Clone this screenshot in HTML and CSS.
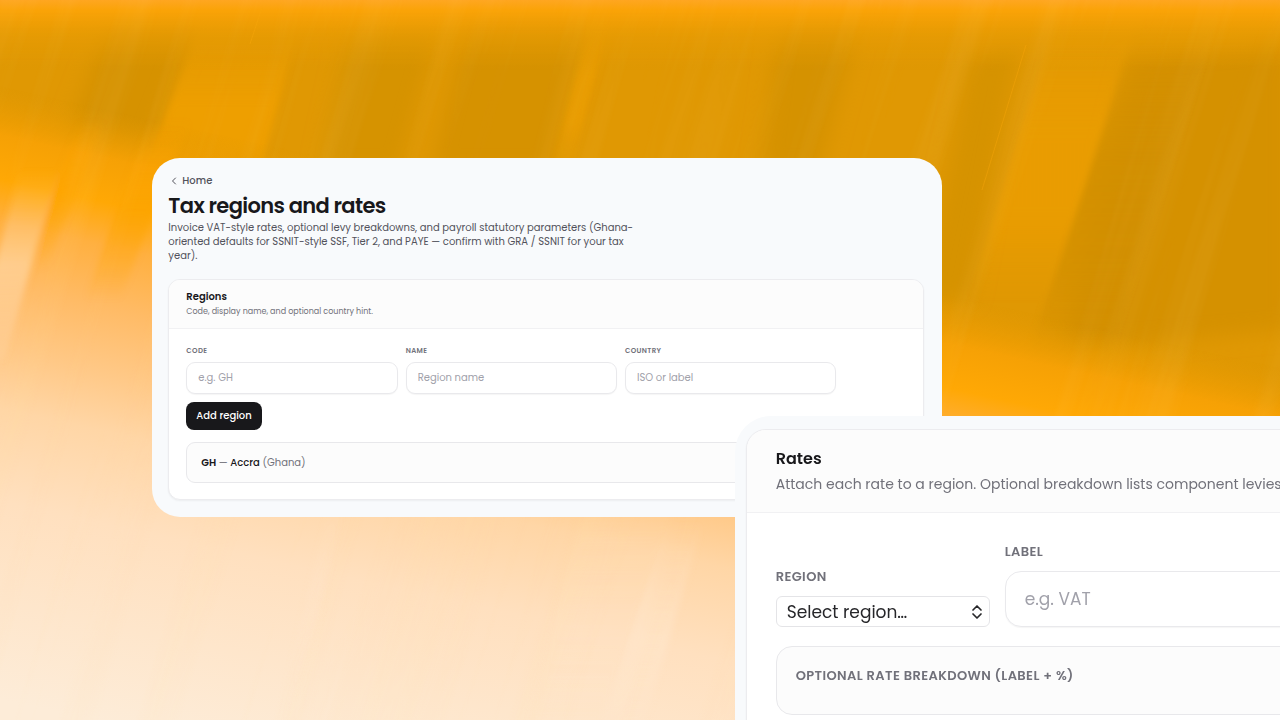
FILE: index.html
```html
<!DOCTYPE html>
<html lang="en">
<head>
    <meta charset="UTF-8">
    <meta name="viewport" content="width=device-width, initial-scale=1.0">
    <title>Tax regions and rates</title>
    <link rel="stylesheet" href="styles.css">
</head>
<body>
    <!-- Brushed silk backdrop -->
    <svg class="backdrop" viewBox="0 0 1280 720" preserveAspectRatio="none" aria-hidden="true">
        <defs>
            <linearGradient id="top" x1="0" y1="0" x2="0" y2="1">
                <stop offset="0" stop-color="#ffa620"/>
                <stop offset="0.15" stop-color="#faa307"/>
                <stop offset="0.5" stop-color="#e99c04" stop-opacity="0.7"/>
                <stop offset="1" stop-color="#e09803" stop-opacity="0"/>
            </linearGradient>
            <linearGradient id="glow" gradientUnits="userSpaceOnUse" x1="0" y1="80" x2="-130" y2="671">
                <stop offset="0.01" stop-color="#e39a03" stop-opacity="0"/>
                <stop offset="0.05" stop-color="#ec9d03" stop-opacity="0.6"/>
                <stop offset="0.09" stop-color="#f6a105"/>
                <stop offset="0.16" stop-color="#ffa805"/>
                <stop offset="0.23" stop-color="#ffb040"/>
                <stop offset="0.33" stop-color="#ffbb66"/>
                <stop offset="0.44" stop-color="#ffc988"/>
                <stop offset="0.53" stop-color="#ffd6a6"/>
                <stop offset="0.68" stop-color="#ffe0bf"/>
                <stop offset="1" stop-color="#fdecd8"/>
            </linearGradient>
            <!-- Fades a fold out at both ends -->
            <linearGradient id="light" x1="0" y1="0" x2="0" y2="1">
                <stop offset="0" stop-color="#f0a004" stop-opacity="0"/>
                <stop offset="0.45" stop-color="#f0a004" stop-opacity="0.85"/>
                <stop offset="0.7" stop-color="#f0a004" stop-opacity="0.85"/>
                <stop offset="1" stop-color="#f0a004" stop-opacity="0"/>
            </linearGradient>
            <linearGradient id="dark" x1="0" y1="0" x2="0" y2="1">
                <stop offset="0" stop-color="#d18f06" stop-opacity="0"/>
                <stop offset="0.4" stop-color="#d18f06" stop-opacity="0.8"/>
                <stop offset="0.7" stop-color="#d18f06" stop-opacity="0.7"/>
                <stop offset="1" stop-color="#d18f06" stop-opacity="0"/>
            </linearGradient>
            <linearGradient id="amber" x1="0" y1="0" x2="0" y2="1">
                <stop offset="0" stop-color="#fda400" stop-opacity="0"/>
                <stop offset="0.5" stop-color="#fda400" stop-opacity="0.7"/>
                <stop offset="1" stop-color="#fda400" stop-opacity="0"/>
            </linearGradient>
            <linearGradient id="cream" x1="0" y1="0" x2="0" y2="1">
                <stop offset="0" stop-color="#ffe8cf" stop-opacity="0"/>
                <stop offset="0.5" stop-color="#ffe8cf" stop-opacity="0.45"/>
                <stop offset="1" stop-color="#ffe8cf" stop-opacity="0.1"/>
            </linearGradient>
            <filter id="soft" x="-30%" y="-30%" width="160%" height="160%">
                <feGaussianBlur stdDeviation="10"/>
            </filter>
            <filter id="fine" x="-30%" y="-30%" width="160%" height="160%">
                <feGaussianBlur stdDeviation="3"/>
            </filter>
            <filter id="streaks" x="0" y="0" width="100%" height="100%">
                <feTurbulence type="fractalNoise" baseFrequency="0.025 0.001" numOctaves="4" seed="4"/>
                <feColorMatrix values="0 0 0 0 1  0 0 0 0 0.78  0 0 0 0 0.35  2 0 0 0 -0.9"/>
            </filter>
        </defs>
        <rect width="1280" height="720" fill="#e09803"/>
        <g filter="url(#soft)">
            <polygon points="110,20 195,20 145,150 60,150" fill="#d69200"/>
            <polygon points="350,30 440,20 400,170 320,170" fill="#d69300"/>
            <polygon points="470,10 590,10 550,170 430,170" fill="#d69200"/>
            <polygon points="780,20 860,20 820,170 760,170" fill="#d59200"/>
            <polygon points="970,60 1020,40 970,300 920,300" fill="#d69300"/>
            <polygon points="1130,60 1290,40 1290,330 1060,350" fill="#d59105"/>
        </g>
        <g filter="url(#fine)">
            <polygon points="202,20 300,20 250,210 130,210" fill="url(#light)"/>
            <polygon points="1060,0 1142,0 1050,300 970,300" fill="url(#light)" opacity="0.7"/>
            <polygon points="1140,20 1215,20 1100,380 1020,380" fill="url(#dark)"/>
            <polygon points="596,0 616,0 570,170 552,170" fill="url(#light)" opacity="0.7"/>
        </g>
        <rect width="1280" height="70" fill="url(#top)"/>
        <rect width="1280" height="720" fill="url(#glow)"/>
        <g filter="url(#fine)">
            <polygon points="80,120 105,120 45,270 25,270" fill="url(#amber)"/>
            <polygon points="150,120 190,120 120,300 85,300" fill="url(#amber)"/>
            <polygon points="20,170 58,170 5,360 -30,360" fill="url(#cream)"/>
            <polygon points="330,500 345,500 290,740 275,740" fill="url(#cream)" opacity="0.6"/>
            <polygon points="590,480 680,480 610,760 520,760" fill="url(#cream)" opacity="0.4"/>
            <polygon points="668,520 704,520 634,760 590,760" fill="url(#cream)"/>
        </g>
        <rect x="-400" y="-200" width="2200" height="1200" filter="url(#streaks)" opacity="0.1" transform="skewX(-17)"/>
        <path d="M1026 45 982 190M262 8 250 44" stroke="#fba80c" stroke-width="1" opacity="0.4"/>
    </svg>

    <main class="stage">
        <section class="window">
            <a class="back-link" href="#">
                <svg width="12" height="12" viewBox="0 0 12 12" fill="none" stroke="currentColor" stroke-linecap="round" stroke-linejoin="round"><path d="M7.5 3 4.5 6l3 3"/></svg>
                Home
            </a>
            <h1>Tax regions and rates</h1>
            <p class="intro">Invoice VAT-style rates, optional levy breakdowns, and payroll statutory parameters (Ghana-oriented defaults for SSNIT-style SSF, Tier 2, and PAYE — confirm with GRA / SSNIT for your tax year).</p>

            <div class="card">
                <header class="card-header">
                    <h2>Regions</h2>
                    <p>Code, display name, and optional country hint.</p>
                </header>
                <div class="card-body">
                    <form class="region-form">
                        <div class="field">
                            <label for="code">Code</label>
                            <input type="text" id="code" placeholder="e.g. GH">
                        </div>
                        <div class="field">
                            <label for="name">Name</label>
                            <input type="text" id="name" placeholder="Region name">
                        </div>
                        <div class="field">
                            <label for="country">Country</label>
                            <input type="text" id="country" placeholder="ISO or label">
                        </div>
                        <button type="button">Add region</button>
                    </form>
                    <ul class="region-list">
                        <li><strong>GH</strong> <span class="muted">—</span> Accra <span class="muted">(Ghana)</span></li>
                    </ul>
                </div>
            </div>
        </section>

        <section class="window window-rates">
            <div class="card">
                <header class="card-header">
                    <h2>Rates</h2>
                    <p>Attach each rate to a region. Optional breakdown lists component levies</p>
                </header>
                <div class="card-body">
                    <form class="rate-form">
                        <div class="field field-region">
                            <label for="region">Region</label>
                            <div class="select-wrap">
                                <select id="region">
                                    <option>Select region…</option>
                                </select>
                                <svg width="12" height="16" viewBox="0 0 12 16" fill="none" stroke="currentColor" stroke-width="1.7" stroke-linecap="round" stroke-linejoin="round"><path d="M2 6l4-4 4 4M2 10l4 4 4-4"/></svg>
                            </div>
                        </div>
                        <div class="field field-label">
                            <label for="label">Label</label>
                            <input type="text" id="label" placeholder="e.g. VAT">
                        </div>
                    </form>
                    <div class="breakdown">
                        <h3>Optional rate breakdown (label + %)</h3>
                    </div>
                </div>
            </div>
        </section>
    </main>
</body>
</html>
```
FILE: styles.css
```css
* {
    box-sizing: border-box;
}
body {
    margin: 0;
    font-family: Poppins, Inter, sans-serif;
    color: #18181b;
    background: #f2a002;
    overflow: hidden;
}
h1, h2, h3, p, ul {
    margin: 0;
    padding: 0;
}
input, select, button {
    font-family: inherit;
    color: inherit;
}
.backdrop {
    position: fixed;
    inset: 0;
    width: 100%;
    height: 100%;
    z-index: -1;
}
.stage {
    position: relative;
    min-height: 100vh;
    padding: 158px 0 0 11.9%;
    overflow: hidden;
}

/* Regions window */
.window {
    width: 70%;
    padding: 16px 18px 17px 16px;
    background: #f8fafc;
    border-radius: 28px;
}
.back-link {
    display: flex;
    align-items: center;
    gap: 2px;
    font-size: 10px;
    line-height: 14px;
    font-weight: 500;
    color: #52525b;
    text-decoration: none;
}
h1 {
    margin-top: 5px;
    font-size: 21px;
    line-height: 26px;
    font-weight: 600;
    letter-spacing: -0.03em;
}
.intro {
    max-width: 470px;
    margin: 2px 0 16px;
    font-size: 10px;
    line-height: 14px;
    color: #52525b;
}
.card {
    background: #fff;
    border: 1px solid #ececef;
    border-radius: 12px;
    box-shadow: 0 1px 2px rgba(0,0,0,0.05);
    overflow: hidden;
}
.card-header {
    padding: 9px 17px;
    background: #fcfcfc;
    border-bottom: 1px solid #f1f1f3;
}
.card-header h2 {
    font-size: 10px;
    line-height: 15px;
    font-weight: 600;
}
.card-header p {
    font-size: 8px;
    line-height: 15px;
    color: #71717a;
}
.card-body {
    padding: 17px 17px 16px;
}
.region-form {
    display: flex;
    flex-wrap: wrap;
    gap: 8px;
    max-width: 650px;
}
.field {
    flex: 1 0 30%;
    display: flex;
    flex-direction: column;
    gap: 6px;
}
.field label {
    font-size: 7px;
    line-height: 10px;
    font-weight: 600;
    letter-spacing: 0.05em;
    text-transform: uppercase;
    color: #71717a;
}
.field input {
    width: 100%;
    height: 32px;
    padding: 0 11px;
    font-size: 10px;
    background: #fff;
    border: 1px solid #e9e9ec;
    border-radius: 9px;
    box-shadow: 0 1px 1px rgba(0,0,0,0.04);
}
.field input::placeholder {
    color: #a1a1aa;
}
.region-form button {
    height: 28px;
    padding: 0 10px;
    font-size: 10px;
    font-weight: 500;
    color: #fff;
    background: #18181b;
    border: none;
    border-radius: 8px;
}
.region-list {
    margin-top: 12px;
    list-style: none;
}
.region-list li {
    padding: 12px 14px;
    font-size: 10px;
    line-height: 15px;
    font-weight: 500;
    background: #fcfcfc;
    border: 1px solid #e8e8eb;
    border-radius: 9px;
}
.region-list strong {
    font-weight: 600;
}
.muted {
    font-weight: 400;
    color: #71717a;
}

/* Rates window, laid over the corner of the first one */
.window-rates {
    position: absolute;
    top: 416px;
    left: 57.4%;
    width: 70%;
    padding: 13px 11px;
    border-radius: 36px;
    border-bottom-left-radius: 0;
}
.window-rates .card {
    border-radius: 20px;
}
.window-rates .card-header {
    padding: 16px 29px 15px;
}
.window-rates .card-header h2 {
    font-size: 16px;
    line-height: 26px;
}
.window-rates .card-header p {
    font-size: 14px;
    line-height: 25px;
    white-space: nowrap;
}
.window-rates .card-body {
    padding: 30px 29px;
}
.rate-form {
    display: flex;
    align-items: flex-end;
    gap: 15px;
}
.window-rates .field {
    gap: 10px;
}
.window-rates .field label {
    font-size: 13px;
    line-height: 18px;
    letter-spacing: 0.03em;
}
.window-rates .field-region {
    flex: 0 0 214px;
}
.window-rates .field input {
    height: 56px;
    padding: 0 19px;
    font-size: 17px;
    border-radius: 16px;
}
.select-wrap {
    display: grid;
    align-items: center;
    color: #27272a;
}
.select-wrap select, .select-wrap svg {
    grid-area: 1 / 1;
}
.select-wrap select {
    width: 100%;
    height: 31px;
    padding: 0 10px;
    font-size: 17px;
    background: #fff;
    border: 1px solid #e4e4e7;
    border-radius: 6px;
    appearance: none;
}
.select-wrap svg {
    justify-self: end;
    margin-right: 7px;
    pointer-events: none;
}
.breakdown {
    margin-top: 19px;
    padding: 19px;
    height: 69px;
    background: #fcfcfc;
    border: 1px solid #e8e8eb;
    border-radius: 16px;
}
.breakdown h3 {
    font-size: 13px;
    line-height: 20px;
    font-weight: 600;
    letter-spacing: 0.03em;
    text-transform: uppercase;
    color: #71717a;
}
```
